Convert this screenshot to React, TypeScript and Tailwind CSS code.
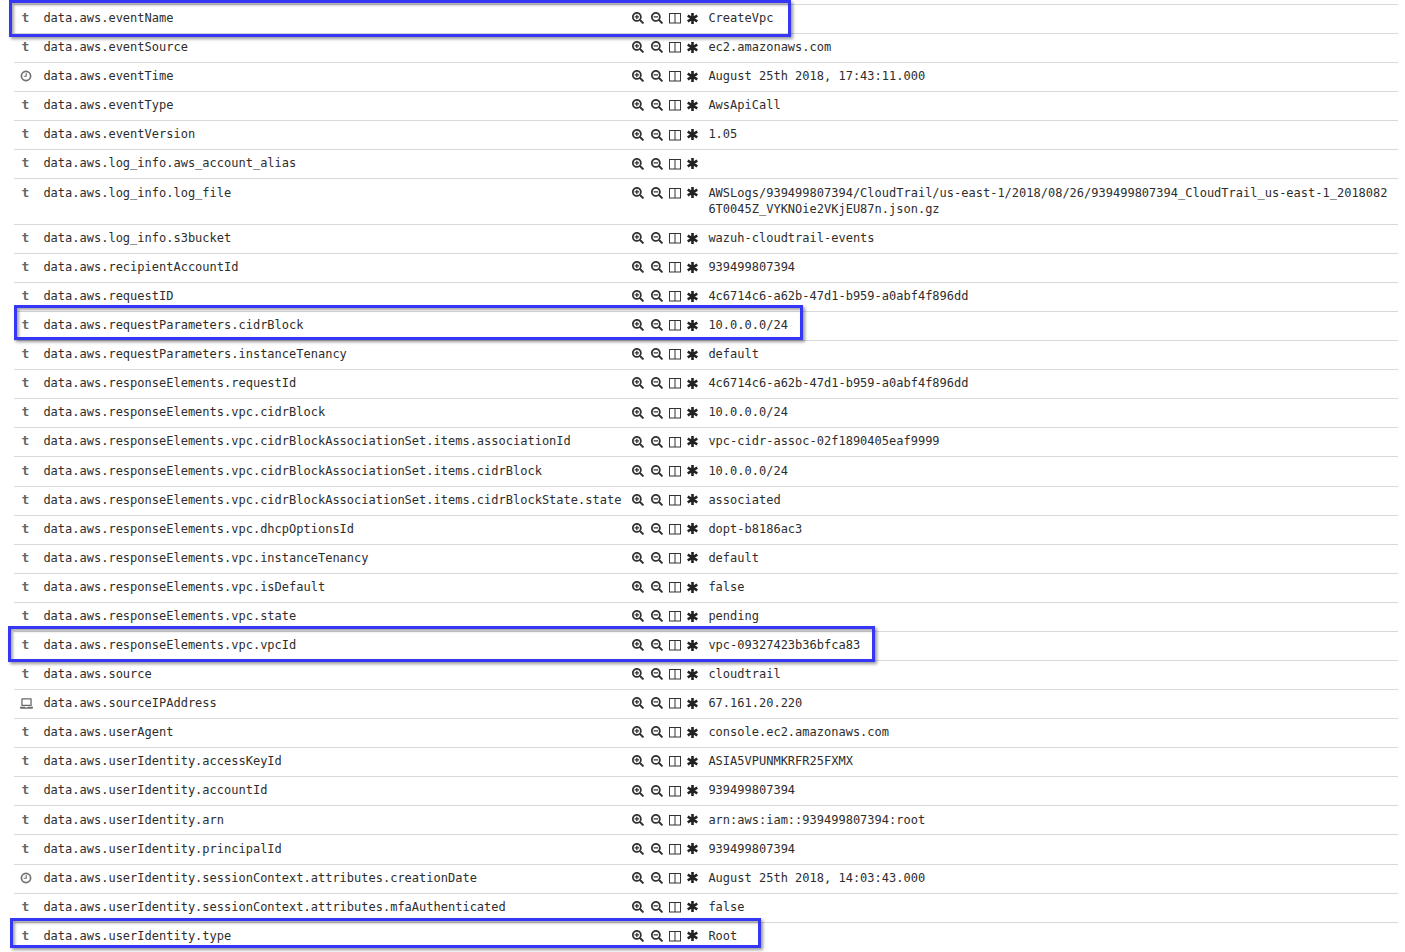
import { FaSearchMinus, FaSearchPlus, FaLaptop } from 'react-icons/fa';

type Row = { type?: 't' | 'date' | 'ip'; name: string; value: string };

const rows: Row[] = [
  { name: 'data.aws.eventName', value: 'CreateVpc' },
  { name: 'data.aws.eventSource', value: 'ec2.amazonaws.com' },
  { type: 'date', name: 'data.aws.eventTime', value: 'August 25th 2018, 17:43:11.000' },
  { name: 'data.aws.eventType', value: 'AwsApiCall' },
  { name: 'data.aws.eventVersion', value: '1.05' },
  { name: 'data.aws.log_info.aws_account_alias', value: '' },
  {
    name: 'data.aws.log_info.log_file',
    value: 'AWSLogs/939499807394/CloudTrail/us-east-1/2018/08/26/939499807394_CloudTrail_us-east-1_20180826T0045Z_VYKNOie2VKjEU87n.json.gz',
  },
  { name: 'data.aws.log_info.s3bucket', value: 'wazuh-cloudtrail-events' },
  { name: 'data.aws.recipientAccountId', value: '939499807394' },
  { name: 'data.aws.requestID', value: '4c6714c6-a62b-47d1-b959-a0abf4f896dd' },
  { name: 'data.aws.requestParameters.cidrBlock', value: '10.0.0.0/24' },
  { name: 'data.aws.requestParameters.instanceTenancy', value: 'default' },
  { name: 'data.aws.responseElements.requestId', value: '4c6714c6-a62b-47d1-b959-a0abf4f896dd' },
  { name: 'data.aws.responseElements.vpc.cidrBlock', value: '10.0.0.0/24' },
  { name: 'data.aws.responseElements.vpc.cidrBlockAssociationSet.items.associationId', value: 'vpc-cidr-assoc-02f1890405eaf9999' },
  { name: 'data.aws.responseElements.vpc.cidrBlockAssociationSet.items.cidrBlock', value: '10.0.0.0/24' },
  { name: 'data.aws.responseElements.vpc.cidrBlockAssociationSet.items.cidrBlockState.state', value: 'associated' },
  { name: 'data.aws.responseElements.vpc.dhcpOptionsId', value: 'dopt-b8186ac3' },
  { name: 'data.aws.responseElements.vpc.instanceTenancy', value: 'default' },
  { name: 'data.aws.responseElements.vpc.isDefault', value: 'false' },
  { name: 'data.aws.responseElements.vpc.state', value: 'pending' },
  { name: 'data.aws.responseElements.vpc.vpcId', value: 'vpc-09327423b36bfca83' },
  { name: 'data.aws.source', value: 'cloudtrail' },
  { type: 'ip', name: 'data.aws.sourceIPAddress', value: '67.161.20.220' },
  { name: 'data.aws.userAgent', value: 'console.ec2.amazonaws.com' },
  { name: 'data.aws.userIdentity.accessKeyId', value: 'ASIA5VPUNMKRFR25FXMX' },
  { name: 'data.aws.userIdentity.accountId', value: '939499807394' },
  { name: 'data.aws.userIdentity.arn', value: 'arn:aws:iam::939499807394:root' },
  { name: 'data.aws.userIdentity.principalId', value: '939499807394' },
  { type: 'date', name: 'data.aws.userIdentity.sessionContext.attributes.creationDate', value: 'August 25th 2018, 14:03:43.000' },
  { name: 'data.aws.userIdentity.sessionContext.attributes.mfaAuthenticated', value: 'false' },
  { name: 'data.aws.userIdentity.type', value: 'Root' },
];

// callouts drawn on top of the table
const Callout = ({ className }: { className: string }) => (
  <div
    className={`absolute border-[3px] border-[#3636f5] shadow-[2px_2px_3px_rgba(0,0,0,0.4),inset_2px_2px_3px_rgba(0,0,0,0.35)] ${className}`}
  />
);

const ClockIcon = () => (
  <svg width="12" height="12" viewBox="0 0 12 12" fill="none" stroke="#707070">
    <circle cx="6" cy="6" r="4.6" strokeWidth="1.7" />
    <path d="M6.2 3v3.3H3.8" strokeWidth="1.1" />
  </svg>
);

const ColumnsIcon = () => (
  <svg width="12" height="12" viewBox="0 0 12 12" fill="none" stroke="#333" className="ml-[6px] shrink-0">
    <rect x="0.5" y="1.5" width="11" height="9.5" />
    <path d="M6 1.5v9.5" />
  </svg>
);

const AsteriskIcon = () => (
  <svg width="11" height="11" viewBox="0 0 11 11" stroke="#222" strokeWidth="2.6" className="ml-[6px] shrink-0">
    <path d="M5.5 0v11M.7 2.7l9.6 5.6M.7 8.3l9.6-5.6" />
  </svg>
);

const TypeIcon = ({ type }: { type?: Row['type'] }) => {
  if (type === 'date') return <ClockIcon />;
  if (type === 'ip') return <FaLaptop className="text-[13px] text-[#6b6b6b]" />;
  return <span className="pl-[1.5px] text-[13px] font-bold text-[#666]">t</span>;
};

const App = () => {
  return (
    <div className="relative h-[952px] w-[1405px] overflow-hidden bg-white pl-[14px] pr-[7px] pt-[4px] font-['DejaVu_Sans_Mono',monospace] text-[12px] leading-[16.3px] text-[#2d2d2d]">
      {rows.map((row) => (
        <div key={row.name} className="flex border-t border-[#d9d9d9] pb-[6.69px] pt-[5.1px]">
          <div className="flex h-[16.3px] w-[29.4px] shrink-0 items-center pl-[6px]">
            <TypeIcon type={row.type} />
          </div>
          <div className="w-[588px] shrink-0 whitespace-nowrap">{row.name}</div>
          <div className="flex h-[16.3px] w-[77px] shrink-0 items-center text-[12px] text-[#333]">
            <FaSearchPlus className="ml-[0.6px] shrink-0" />
            <FaSearchMinus className="ml-[7px] shrink-0" />
            <ColumnsIcon />
            <AsteriskIcon />
          </div>
          <div className="w-[682px] break-all">{row.value}</div>
        </div>
      ))}
      <Callout className="left-[9px] top-0 h-[37px] w-[782px]" />
      <Callout className="left-[14px] top-[305px] h-[35px] w-[789px]" />
      <Callout className="left-[8px] top-[626px] h-[36px] w-[867px]" />
      <Callout className="left-[10px] top-[918px] h-[30px] w-[751px]" />
    </div>
  );
};

export default App;
